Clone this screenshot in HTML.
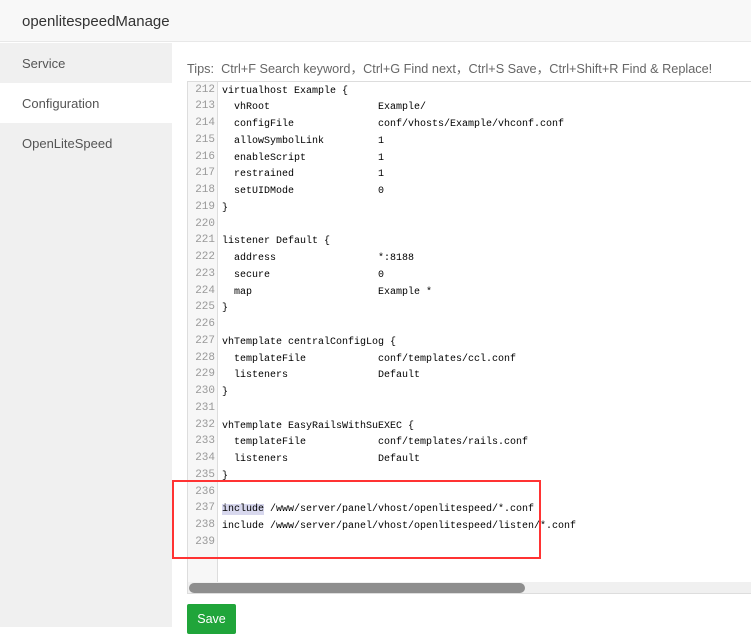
<!DOCTYPE html>
<html><head><meta charset="utf-8"><style>
*{margin:0;padding:0;box-sizing:border-box}
body{width:751px;height:627px;overflow:hidden;background:#fff;font-family:"Liberation Sans","Noto Sans CJK SC",sans-serif;position:relative}
.hdr{position:absolute;left:0;top:0;width:751px;height:42px;background:#f8f8f8;border-bottom:1px solid #e8e8e8;font-size:15px;color:#333;padding:13px 0 0 22px}
.side{position:absolute;left:0;top:43px;width:172px;height:584px;background:#f0f0f0}
.side div{height:40px;line-height:41px;padding-left:22px;font-size:13px;color:#555}
.side .act{background:#fff}
.tips{position:absolute;left:187px;top:58px;font-size:12.7px;color:#666;white-space:nowrap}
.ed{position:absolute;left:187px;top:81px;width:570px;height:513px;border:1px solid #ddd;border-right:none;background:#fff;overflow:hidden}
.gut{position:absolute;left:0;top:0;width:30px;height:100%;background:#f7f7f7;border-right:1px solid #ddd}
.ln{position:absolute;left:0;width:27px;text-align:right;font:11px "Liberation Mono",monospace;color:#999}
.cd{position:absolute;left:34px;font:10px "Liberation Mono",monospace;color:#000;white-space:pre;line-height:13px}
.v{position:absolute;left:190px;font:10px "Liberation Mono",monospace;white-space:pre;line-height:13px}
.sb{position:absolute;left:0;top:500px;width:570px;height:12px;background:#f0f0f0}
.sb i{position:absolute;left:1px;top:1px;width:336px;height:10px;border-radius:5px;background:#8e8e8e}
.red{position:absolute;left:172px;top:480px;width:369px;height:79px;border:2px solid #f33}
.save{position:absolute;left:187px;top:604px;width:49px;height:30px;background:#20a53a;border-radius:2px;color:#fff;font-size:12.5px;text-align:center;line-height:30px}
.hl{background:#d8d8ee}
</style></head><body>
<div class="hdr">openlitespeedManage</div>
<div class="side"><div>Service</div><div class="act">Configuration</div><div>OpenLiteSpeed</div></div>
<div class="tips">Tips:&nbsp; Ctrl+F Search keyword，Ctrl+G Find next，Ctrl+S Save，Ctrl+Shift+R Find &amp; Replace!</div>
<div class="ed"><div class="gut"></div>
<div id="c"></div>
<div class="sb"><i></i></div>
</div>
<div class="red"></div>
<div class="save">Save</div>
<script>
var L=[["virtualhost Example {",""],["  vhRoot","Example/"],["  configFile","conf/vhosts/Example/vhconf.conf"],["  allowSymbolLink","1"],["  enableScript","1"],["  restrained","1"],["  setUIDMode","0"],["}",""],["",""],["listener Default {",""],["  address","*:8188"],["  secure","0"],["  map","Example *"],["}",""],["",""],["vhTemplate centralConfigLog {",""],["  templateFile","conf/templates/ccl.conf"],["  listeners","Default"],["}",""],["",""],["vhTemplate EasyRailsWithSuEXEC {",""],["  templateFile","conf/templates/rails.conf"],["  listeners","Default"],["}",""],["",""],["<span class='hl'>include</span> /www/server/panel/vhost/openlitespeed/*.conf",""],["include /www/server/panel/vhost/openlitespeed/listen/*.conf",""],["",""]];
var h="";for(var i=0;i<L.length;i++){var t=1.5+i*16.75;h+="<div class='ln' style='top:"+t+"px'>"+(212+i)+"</div><div class='cd' style='top:"+(t+1)+"px'>"+L[i][0]+"</div>";if(L[i][1])h+="<div class='v' style='top:"+(t+1)+"px'>"+L[i][1]+"</div>";}
document.getElementById("c").innerHTML=h;
</script>
</body></html>
